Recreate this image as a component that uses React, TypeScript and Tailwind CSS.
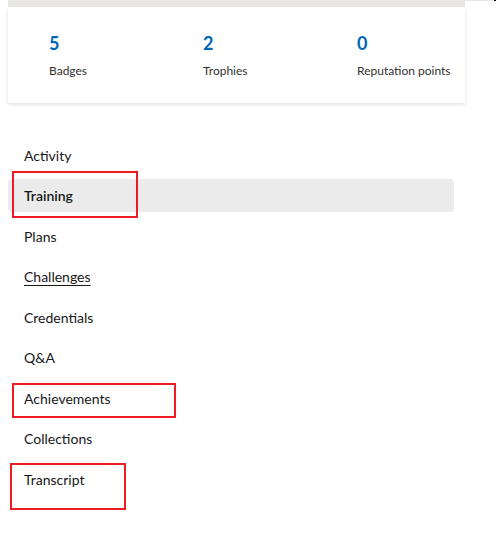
const stats = [
  { value: '5', label: 'Badges' },
  { value: '2', label: 'Trophies' },
  { value: '0', label: 'Reputation points' },
];

type NavItem = {
  label: string;
  active?: boolean;
  underline?: boolean;
  mark?: string;
};

// red annotation boxes sit over the items they point at
const navItems: NavItem[] = [
  { label: 'Activity' },
  { label: 'Training', active: true, mark: 'left-[4px] top-[-4.5px] w-[126px] h-[47px]' },
  { label: 'Plans' },
  { label: 'Challenges', underline: true },
  { label: 'Credentials' },
  { label: 'Q&A' },
  { label: 'Achievements', mark: 'left-[4px] top-[5px] w-[164px] h-[35px]' },
  { label: 'Collections' },
  { label: 'Transcript', mark: 'left-[2px] top-[4px] w-[116px] h-[47px]' },
];

export default function App() {
  return (
    <div
      className="relative w-[496px] h-[558px] bg-white text-[#171717] overflow-hidden"
      style={{ fontFamily: '"Segoe UI", Lato, "Noto Sans", sans-serif' }}
    >
      <div className="ml-2 w-[457px]">
        <div className="h-[7px] bg-[#e8e6e0]" />
        <div className="bg-white h-[96px] pl-[41px] pt-[23px] grid grid-cols-[154px_154px_1fr] shadow-[0_1.6px_3.6px_rgba(0,0,0,0.13),0_0.3px_0.9px_rgba(0,0,0,0.11)]">
          {stats.map((s) => (
            <div key={s.label} className="flex flex-col">
              <span className="text-[18px] leading-[26px] font-bold text-[#0067b8]">{s.value}</span>
              <span className="mt-[7px] text-[12px] leading-[16px] text-[#323130]">{s.label}</span>
            </div>
          ))}
        </div>
      </div>

      <ul className="mt-[32px] ml-2 w-[446px] flex flex-col">
        {navItems.map((item) => (
          <li key={item.label} className="relative py-[3.75px]">
            <a
              href="#"
              className={`h-[33px] flex items-center px-4 rounded-[4px] text-[14px] ${
                item.active ? 'bg-[#ebebeb] font-semibold' : ''
              } ${item.underline ? 'underline underline-offset-[3px]' : 'no-underline'}`}
            >
              {item.label}
            </a>
            {item.mark && (
              <span className={`absolute border-2 border-[#ed1c24] pointer-events-none ${item.mark}`} />
            )}
          </li>
        ))}
      </ul>

      {/* stray edge pixels from the crop */}
      <div className="absolute top-0 left-[465px] w-[29px] h-px bg-[#e6e6e6]" />
      <div className="absolute top-0 left-[494px] w-[2px] h-px bg-black" />
    </div>
  );
}
